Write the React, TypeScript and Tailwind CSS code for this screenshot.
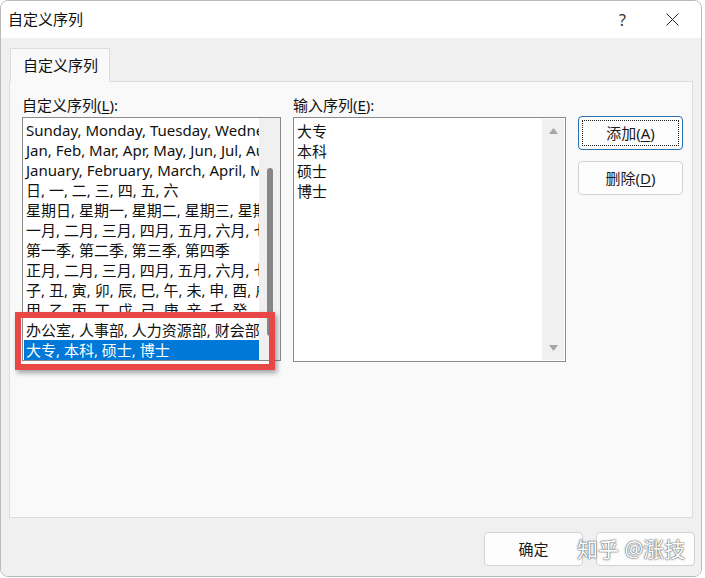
import React from "react";

const listItems = [
  "Sunday, Monday, Tuesday, Wednesday, Thursday, Friday, Saturday",
  "Jan, Feb, Mar, Apr, May, Jun, Jul, Aug, Sep, Oct, Nov, Dec",
  "January, February, March, April, May, June, July, August",
  "日, 一, 二, 三, 四, 五, 六",
  "星期日, 星期一, 星期二, 星期三, 星期四, 星期五, 星期六",
  "一月, 二月, 三月, 四月, 五月, 六月, 七月, 八月",
  "第一季, 第二季, 第三季, 第四季",
  "正月, 二月, 三月, 四月, 五月, 六月, 七月, 八月",
  "子, 丑, 寅, 卯, 辰, 巳, 午, 未, 申, 酉, 戌, 亥",
  "甲, 乙, 丙, 丁, 戊, 己, 庚, 辛, 壬, 癸",
  "办公室, 人事部, 人力资源部, 财会部",
  "大专, 本科, 硕士, 博士",
];

const inputItems = ["大专", "本科", "硕士", "博士"];

function Btn({ children, focused }: { children?: React.ReactNode; focused?: boolean }) {
  return (
    <div
      className={
        "h-[34px] rounded-[4px] bg-[#fdfdfd] flex items-center justify-center text-[#1a1a1a] " +
        (focused ? "border border-[#2a6fb0] p-[3px]" : "border border-[#d3d3d3]")
      }
    >
      {focused ? (
        <div className="w-full h-full border border-dotted border-[#222] flex items-center justify-center">
          {children}
        </div>
      ) : (
        children
      )}
    </div>
  );
}

export default function App() {
  return (
    <div className="w-[705px] h-[578px] bg-white relative overflow-hidden text-[15px] font-['Noto_Sans','Noto_Sans_CJK_SC',sans-serif] text-[#111]">
      <div className="w-[702px] h-[577px] border border-[#b9b9b9] rounded-lg overflow-hidden flex flex-col">
        {/* title bar */}
        <div className="h-[37px] bg-white flex items-center pl-[7px] shrink-0">
          <span>自定义序列</span>
          <span className="ml-auto mr-[40px] text-[16px] text-[#333]">?</span>
          <svg width="13" height="13" viewBox="0 0 13 13" className="mr-[22px]">
            <path d="M0.5 0.5 L12.5 12.5 M12.5 0.5 L0.5 12.5" stroke="#222" strokeWidth="1" />
          </svg>
        </div>

        {/* body */}
        <div className="flex-1 bg-[#f0f0f0] px-[8px] pt-[10px] flex flex-col">
          <div className="ml-[1px] w-[100px] h-[34px] -mb-px relative z-10 border border-b-0 border-[#dcdcdc] bg-[#f9f9f9] flex items-center pl-[12px] rounded-t-[2px]">
            自定义序列
          </div>
          <div className="h-[437px] border border-[#dcdcdc] bg-[#f9f9f9] pl-[12px] pt-[13px] flex gap-[12px]">
            {/* left column */}
            <div className="w-[259px] flex flex-col">
              <div className="h-[20px] leading-[20px] mb-[2px]">
                自定义序列(<span className="underline underline-offset-2">L</span>):
              </div>
              <div className="h-[244px] border border-[#8a8a8a] bg-white flex">
                <div className="flex-1 min-w-0 pt-[2px] pl-[1px]">
                  {listItems.map((t, i) => (
                    <div
                      key={i}
                      className={
                        "h-[20px] leading-[20px] whitespace-nowrap overflow-hidden pl-[2px] " +
                        (i === listItems.length - 1 ? "bg-[#0078d7] text-white" : "")
                      }
                    >
                      {t}
                    </div>
                  ))}
                </div>
                <div className="w-[21px] bg-[#f0f0f0] flex justify-center pt-[50px]">
                  <div className="w-[6px] h-[168px] bg-[#868686] rounded-[3px]" />
                </div>
              </div>
            </div>

            {/* right column */}
            <div className="w-[273px] flex flex-col">
              <div className="h-[20px] leading-[20px] mb-[2px]">
                输入序列(<span className="underline underline-offset-2">E</span>):
              </div>
              <div className="h-[245px] border border-[#8a8a8a] bg-white flex">
                <div className="flex-1 pt-[3px] pl-[3px]">
                  {inputItems.map((t) => (
                    <div key={t} className="h-[20px] leading-[20px]">
                      {t}
                    </div>
                  ))}
                </div>
                <div className="w-[22px] my-[1px] mr-[1px] bg-[#f0f0f0] flex flex-col items-center justify-between py-[9px]">
                  <svg width="9" height="6" viewBox="0 0 9 6">
                    <path d="M4.5 0 L9 6 L0 6 Z" fill="#a6a6a6" />
                  </svg>
                  <svg width="9" height="6" viewBox="0 0 9 6">
                    <path d="M0 0 L9 0 L4.5 6 Z" fill="#a6a6a6" />
                  </svg>
                </div>
              </div>
            </div>

            {/* buttons */}
            <div className="w-[105px] pt-[21px] flex flex-col gap-[11px]">
              <Btn focused>
                添加(<span className="underline underline-offset-2">A</span>)
              </Btn>
              <Btn>
                删除(<span className="underline underline-offset-2">D</span>)
              </Btn>
            </div>
          </div>

          {/* footer */}
          <div className="mt-[14px] flex justify-end gap-[13px] -mr-[2px]">
            <div className="w-[99px]">
              <Btn>确定</Btn>
            </div>
            <div className="w-[99px]">
              <Btn />
            </div>
          </div>
        </div>
      </div>

      {/* annotation box */}
      <div className="absolute left-[15px] top-[312px] w-[260px] h-[58px] border-[6px] border-[#e94646] shadow-[2px_3px_5px_rgba(0,0,0,0.35)]" />

      {/* watermark */}
      <div className="absolute left-[577px] top-[535px] text-[21px] leading-[28px] text-white [text-shadow:0_0_1px_#333,0_0_2px_#666]">
        知乎 @涨技
      </div>
    </div>
  );
}
